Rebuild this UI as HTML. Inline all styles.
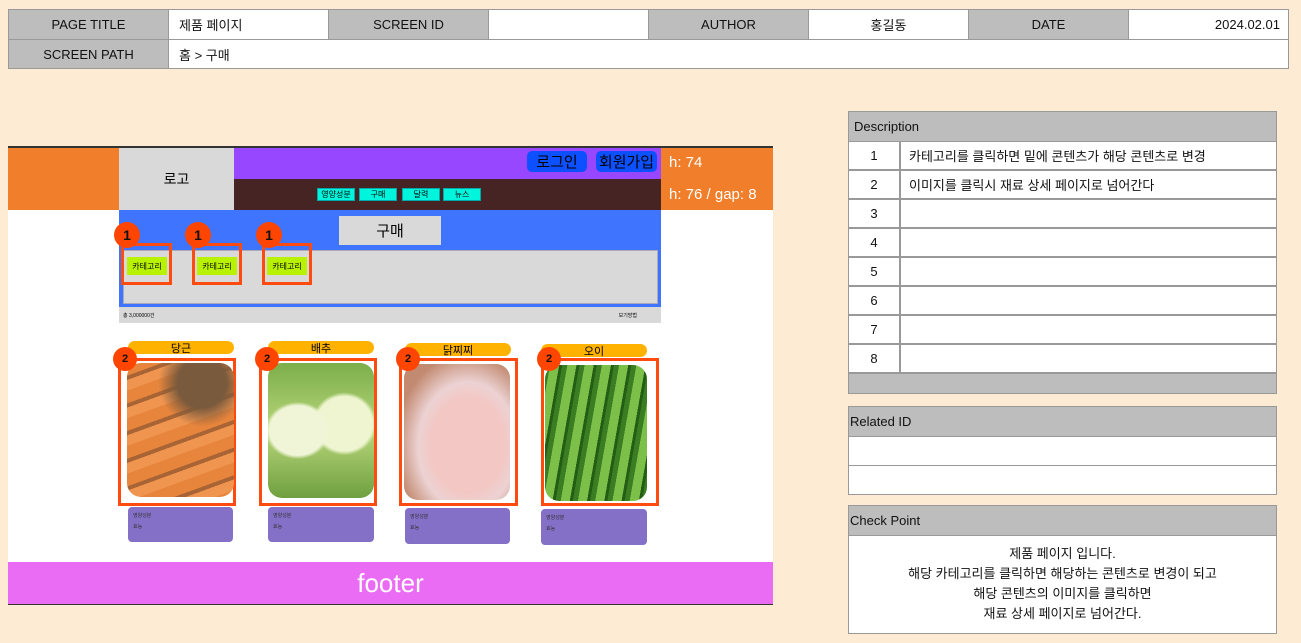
<!DOCTYPE html><html><head><meta charset="utf-8"><style>
*{margin:0;padding:0;box-sizing:border-box}
body{width:1301px;height:643px;background:#fdebd4;position:relative;font-family:"Liberation Sans","Noto Sans CJK KR",sans-serif;overflow:hidden}
.a{position:absolute}
.c{display:flex;align-items:center;justify-content:center}
.l{display:flex;align-items:center}
.t{border:1px solid #999;font-size:13px;color:#111}
.g{background:#bdbdbd}.w{background:#fff}
.badge{width:26px;height:26px;border-radius:50%;background:#ff4500;color:#111;font-weight:bold;font-size:14px}
.badge2{width:24px;height:24px;border-radius:50%;background:#ff4500;color:#111;font-weight:bold;font-size:11px}
.ob{border:3px solid #ff4a10}
.cat{background:#b8f200;font-size:8px;width:40px;height:18px}
.nav{background:#00f5dc;font-size:8px;height:13px;border:1px solid #0aa}
.pill{background:#ffb300;border-radius:8px;font-size:11px;height:13px}
.info{background:#8570c8;border-radius:4px;font-size:5px;padding:4px 5px;line-height:11px;color:#333}
</style></head><body>
<div class="a t g c" style="left:8px;top:9px;width:161px;height:31px">PAGE TITLE</div>
<div class="a t w l" style="left:168px;top:9px;width:161px;height:31px;padding:0 10px">제품 페이지</div>
<div class="a t g c" style="left:328px;top:9px;width:161px;height:31px">SCREEN ID</div>
<div class="a t w" style="left:488px;top:9px;width:161px;height:31px"></div>
<div class="a t g c" style="left:648px;top:9px;width:161px;height:31px">AUTHOR</div>
<div class="a t w c" style="left:808px;top:9px;width:161px;height:31px">홍길동</div>
<div class="a t g c" style="left:968px;top:9px;width:161px;height:31px">DATE</div>
<div class="a t w l" style="left:1128px;top:9px;width:161px;height:31px;justify-content:flex-end;padding:0 8px">2024.02.01</div>
<div class="a t g c" style="left:8px;top:39px;width:161px;height:30px">SCREEN PATH</div>
<div class="a t w l" style="left:168px;top:39px;width:1121px;height:30px;padding:0 10px">홈 &gt; 구매</div>

<div class="a" style="left:8px;top:146px;width:765px;height:2px;background:#333"></div>
<div class="a" style="left:8px;top:148px;width:765px;height:62px;background:#f17e2a"></div>
<div class="a c" style="left:119px;top:148px;width:115px;height:62px;background:#d9d9d9;font-size:14px">로고</div>
<div class="a" style="left:234px;top:148px;width:427px;height:31px;background:#9747ff"></div>
<div class="a c" style="left:527px;top:151px;width:60px;height:21px;background:#0c50ff;border-radius:5px;font-size:15px">로그인</div>
<div class="a c" style="left:596px;top:151px;width:61px;height:21px;background:#0c50ff;border-radius:5px;font-size:15px">회원가입</div>
<div class="a" style="left:234px;top:179px;width:427px;height:31px;background:#472424"></div>
<div class="a nav c" style="left:317px;top:188px;width:38px">영양성분</div>
<div class="a nav c" style="left:359px;top:188px;width:38px">구매</div>
<div class="a nav c" style="left:402px;top:188px;width:38px">달력</div>
<div class="a nav c" style="left:443px;top:188px;width:38px">뉴스</div>
<div class="a" style="left:669px;top:154px;color:#fff;font-size:15px">h: 74</div>
<div class="a" style="left:669px;top:186px;color:#fff;font-size:15px">h: 76 / gap: 8</div>
<div class="a" style="left:8px;top:210px;width:765px;height:352px;background:#fff"></div>
<div class="a" style="left:119px;top:210px;width:542px;height:97px;background:#3f74ff"></div>
<div class="a c" style="left:339px;top:216px;width:102px;height:29px;background:#d9d9d9;font-size:15px">구매</div>
<div class="a" style="left:123px;top:250px;width:535px;height:54px;background:#d9d9d9;border:1px solid #aab"></div>
<div class="a" style="left:119px;top:307px;width:542px;height:16px;background:#d9d9d9;font-size:5px;padding:5px 4px">총 3,000000건<span style="float:right;margin-right:20px">보기방법</span></div>
<div class="a ob" style="left:121px;top:243px;width:51px;height:42px"></div>
<div class="a ob" style="left:192px;top:243px;width:50px;height:42px"></div>
<div class="a ob" style="left:262px;top:243px;width:50px;height:42px"></div>
<div class="a cat c" style="left:127px;top:257px">카테고리</div>
<div class="a cat c" style="left:197px;top:257px">카테고리</div>
<div class="a cat c" style="left:267px;top:257px">카테고리</div>
<div class="a badge c" style="left:114px;top:222px">1</div>
<div class="a badge c" style="left:185px;top:222px">1</div>
<div class="a badge c" style="left:256px;top:222px">1</div>

<div class="a pill c" style="left:128px;top:341px;width:106px">당근</div>
<div class="a pill c" style="left:268px;top:341px;width:106px">배추</div>
<div class="a pill c" style="left:405px;top:343px;width:106px">닭찌찌</div>
<div class="a pill c" style="left:541px;top:344px;width:106px">오이</div>
<div class="a ob" style="left:118px;top:358px;width:118px;height:148px"></div>
<div class="a ob" style="left:259px;top:358px;width:118px;height:148px"></div>
<div class="a ob" style="left:399px;top:358px;width:119px;height:148px"></div>
<div class="a ob" style="left:541px;top:358px;width:118px;height:148px"></div>
<div class="a" style="left:127px;top:363px;width:107px;height:134px;border-radius:14px;background:radial-gradient(circle at 70% 15%,#7a5a3c 0 18%,transparent 32%),repeating-linear-gradient(160deg,#e8853c 0 12px,#a86434 12px 16px,#f09550 16px 26px)"></div>
<div class="a" style="left:268px;top:363px;width:106px;height:135px;border-radius:14px;background:radial-gradient(ellipse at 28% 50%,#f0f5d8 0 26%,transparent 30%),radial-gradient(ellipse at 72% 45%,#eef5d0 0 26%,transparent 30%),linear-gradient(#7cae4a,#b8d67a 50%,#6fa040)"></div>
<div class="a" style="left:404px;top:364px;width:106px;height:136px;border-radius:14px;background:radial-gradient(ellipse at 60% 60%,#f3c7c3 0 40%,#ecd2d3 55%,#c28a70 80%)"></div>
<div class="a" style="left:545px;top:365px;width:102px;height:136px;border-radius:14px;background:repeating-linear-gradient(100deg,#3b7d22 0 5px,#7cc04a 5px 14px,#245e14 14px 17px)"></div>
<div class="a info" style="left:128px;top:507px;width:105px;height:35px">영양성분<br>효능</div>
<div class="a info" style="left:268px;top:507px;width:106px;height:35px">영양성분<br>효능</div>
<div class="a info" style="left:405px;top:508px;width:105px;height:36px">영양성분<br>효능</div>
<div class="a info" style="left:541px;top:509px;width:106px;height:36px">영양성분<br>효능</div>
<div class="a badge2 c" style="left:113px;top:347px">2</div>
<div class="a badge2 c" style="left:255px;top:347px">2</div>
<div class="a badge2 c" style="left:396px;top:347px">2</div>
<div class="a badge2 c" style="left:537px;top:347px">2</div>
<div class="a c" style="left:8px;top:562px;width:765px;height:42px;background:#ea6cf5;color:#fff;font-size:26px">footer</div>
<div class="a" style="left:8px;top:604px;width:765px;height:1px;background:#333"></div>

<div class="a t g l" style="left:848px;top:111px;width:429px;height:31px;padding:0 5px">Description</div>
<div class="a" style="left:848px;top:141px;width:429px">
<div style="display:grid;grid-template-columns:52px 377px">
<div class="t w c" style="height:29px">1</div><div class="t w l" style="height:29px;padding:0 8px">카테고리를 클릭하면 밑에 콘텐츠가 해당 콘텐츠로 변경</div>
<div class="t w c" style="height:29px">2</div><div class="t w l" style="height:29px;padding:0 8px">이미지를 클릭시 재료 상세 페이지로 넘어간다</div>
<div class="t w c" style="height:29px">3</div><div class="t w" style="height:29px"></div>
<div class="t w c" style="height:29px">4</div><div class="t w" style="height:29px"></div>
<div class="t w c" style="height:29px">5</div><div class="t w" style="height:29px"></div>
<div class="t w c" style="height:29px">6</div><div class="t w" style="height:29px"></div>
<div class="t w c" style="height:29px">7</div><div class="t w" style="height:29px"></div>
<div class="t w c" style="height:29px">8</div><div class="t w" style="height:29px"></div>
</div></div>
<div class="a t g" style="left:848px;top:373px;width:429px;height:21px"></div>
<div class="a t g l" style="left:848px;top:406px;width:429px;height:31px;padding:0 1px">Related ID</div>
<div class="a t w" style="left:848px;top:436px;width:429px;height:30px"></div>
<div class="a t w" style="left:848px;top:465px;width:429px;height:30px"></div>
<div class="a t g l" style="left:848px;top:505px;width:429px;height:31px;padding:0 1px">Check Point</div>
<div class="a t w" style="left:848px;top:535px;width:429px;height:99px;text-align:center;line-height:20px;padding-top:8px">제품 페이지 입니다.<br>해당 카테고리를 클릭하면 해당하는 콘텐츠로 변경이 되고<br>해당 콘텐츠의 이미지를 클릭하면<br>재료 상세 페이지로 넘어간다.</div>
</body></html>
